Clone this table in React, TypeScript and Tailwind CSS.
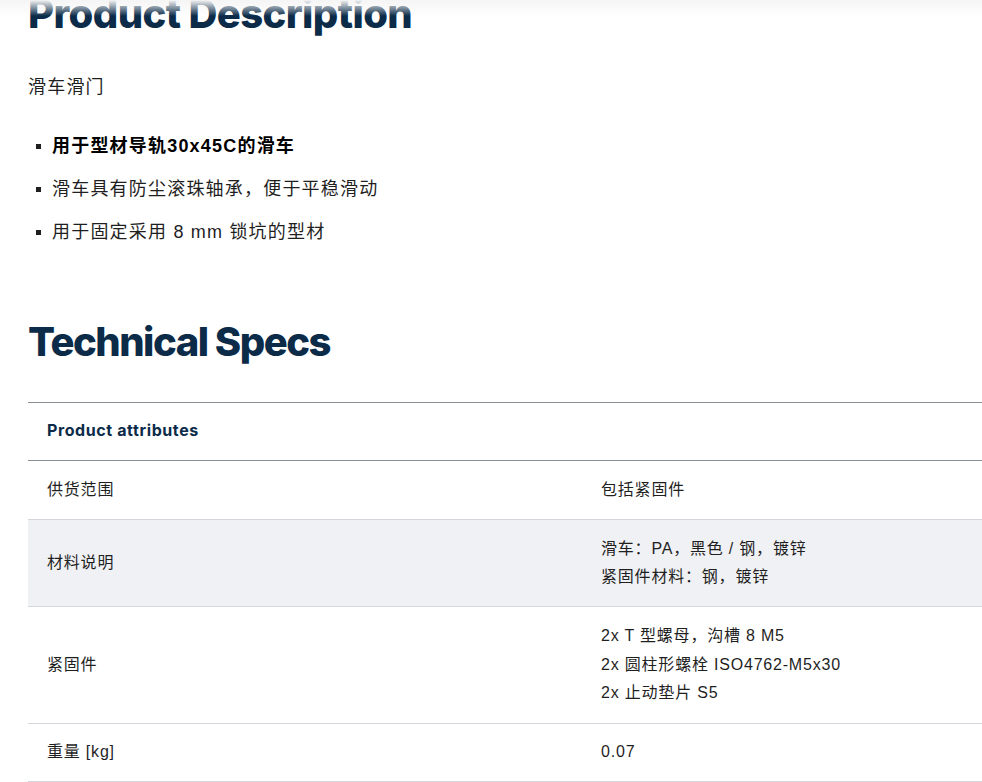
const bullets = [
  { text: '用于型材导轨30x45C的滑车', bold: true },
  { text: '滑车具有防尘滚珠轴承，便于平稳滑动', bold: false },
  { text: '用于固定采用 8 mm 锁坑的型材', bold: false },
]

// row heights follow the reference, border included
const specs: { label: string; value: string[]; h: string; shaded?: boolean }[] = [
  { label: '供货范围', value: ['包括紧固件'], h: 'h-[59px]' },
  {
    label: '材料说明',
    value: ['滑车：PA，黑色 / 钢，镀锌', '紧固件材料：钢，镀锌'],
    h: 'h-[87px]',
    shaded: true,
  },
  {
    label: '紧固件',
    value: ['2x T 型螺母，沟槽 8 M5', '2x 圆柱形螺栓 ISO4762-M5x30', '2x 止动垫片 S5'],
    h: 'h-[117px]',
  },
  { label: '重量 [kg]', value: ['0.07'], h: 'h-[58px]' },
]

export default function App() {
  return (
    <div className="relative h-[782px] overflow-hidden bg-white font-['Liberation_Sans','Noto_Sans_CJK_SC',sans-serif] text-[#1f1f1f]">
      <div className="pointer-events-none absolute inset-x-0 top-0 h-4 bg-gradient-to-b from-[#f5f5f5] to-white/0" />
      <main className="pl-[28px]">
        <h2 className="-mt-[10px] font-['Inter',sans-serif] text-[40px] font-extrabold leading-[48px] tracking-[-0.6px] text-[#0b2b48]">
          Product Description
        </h2>
        <p className="mt-[35px] text-[18px] leading-[28px] tracking-[1.2px]">滑车滑门</p>
        <ul className="mt-[31px] flex flex-col gap-[15px] pl-[8px]">
          {bullets.map((b) => (
            <li key={b.text} className="flex items-center gap-[11px] text-[18px] leading-[28px]">
              <span className="h-[5px] w-[5px] bg-[#1f1f1f]" />
              <span className={b.bold ? 'font-bold tracking-[1.2px] text-black' : 'tracking-[1.2px]'}>{b.text}</span>
            </li>
          ))}
        </ul>

        <h2 className="mt-[72px] font-['Inter',sans-serif] text-[40px] font-extrabold leading-[48px] tracking-[-1.5px] text-[#0b2b48]">
          Technical Specs
        </h2>

        <div className="mt-[36px] w-[1108px] border-t border-[#8a9097]">
          <div className="flex h-[58px] items-center border-b border-[#8a9097] px-[19px] pb-[3px]">
            <span className="font-['Inter',sans-serif] text-[16px] font-bold tracking-[0.6px] text-[#0b2b48]">
              Product attributes
            </span>
          </div>
          {specs.map((row) => (
            <div
              key={row.label}
              className={`grid grid-cols-[554px_1fr] items-center border-b border-[#d3d7db] text-[16px] leading-[28.5px] tracking-[0.8px] ${row.h} ${
                row.shaded ? 'bg-[#eff1f4]' : ''
              }`}
            >
              <div className="px-[19px]">{row.label}</div>
              <div className="px-[19px]">
                {row.value.map((v) => (
                  <div key={v}>{v}</div>
                ))}
              </div>
            </div>
          ))}
        </div>
      </main>
    </div>
  )
}
